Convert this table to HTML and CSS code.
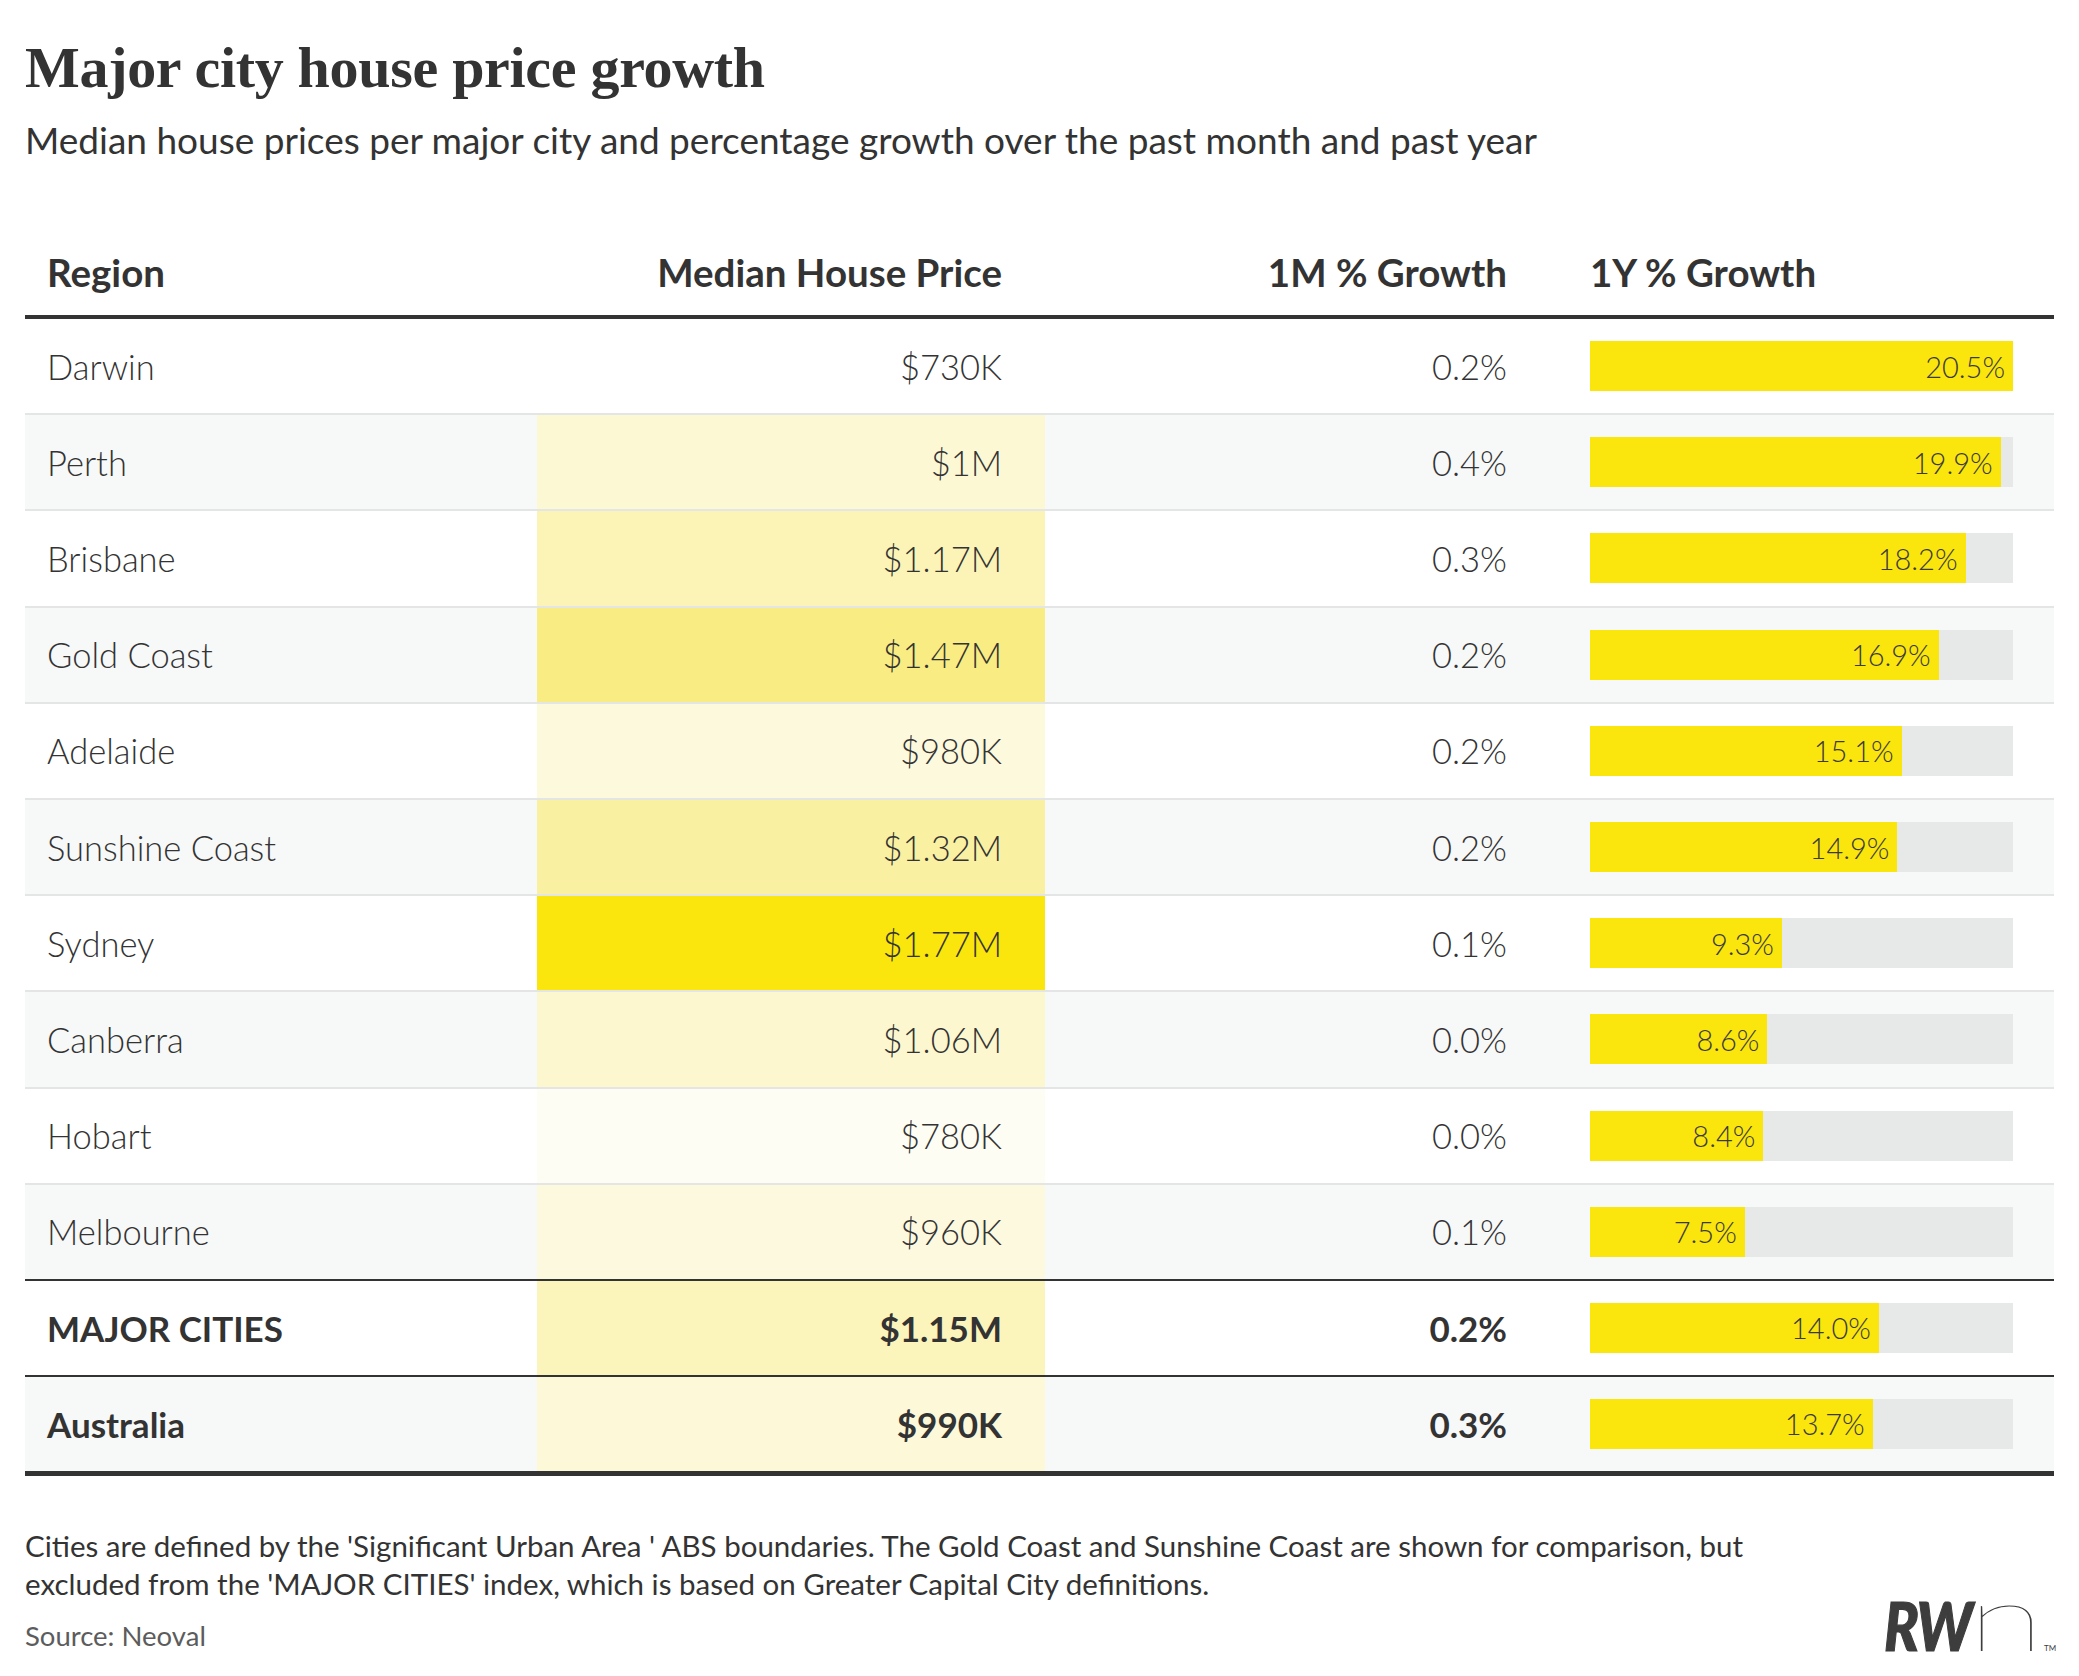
FILE: index.html
```html
<!DOCTYPE html>
<html lang="en">
<head>
<meta charset="utf-8">
<title>Major city house price growth</title>
<link rel="stylesheet" href="styles.css">
</head>
<body>
<div class="page">
  <h1 class="title">Major city house price growth</h1>
  <p class="subtitle">Median house prices per major city and percentage growth over the past month and past year</p>

  <div class="table">
    <div class="row head">
      <div class="cell c-region">Region</div>
      <div class="cell c-price">Median House Price</div>
      <div class="cell c-month">1M % Growth</div>
      <div class="cell c-year">1Y % Growth</div>
    </div>

    <div class="row">
      <div class="cell c-region">Darwin</div>
      <div class="cell c-price">$730K</div>
      <div class="cell c-month">0.2%</div>
      <div class="cell c-year"><div class="track"><div class="fill" style="width:100%"><span>20.5%</span></div></div></div>
    </div>
    <div class="row alt">
      <div class="cell c-region">Perth</div>
      <div class="cell c-price" style="background:#fcf8d4">$1M</div>
      <div class="cell c-month">0.4%</div>
      <div class="cell c-year"><div class="track"><div class="fill" style="width:97.07%"><span>19.9%</span></div></div></div>
    </div>
    <div class="row">
      <div class="cell c-region">Brisbane</div>
      <div class="cell c-price" style="background:#fbf4b6">$1.17M</div>
      <div class="cell c-month">0.3%</div>
      <div class="cell c-year"><div class="track"><div class="fill" style="width:88.78%"><span>18.2%</span></div></div></div>
    </div>
    <div class="row alt">
      <div class="cell c-region">Gold Coast</div>
      <div class="cell c-price" style="background:#f8ec82">$1.47M</div>
      <div class="cell c-month">0.2%</div>
      <div class="cell c-year"><div class="track"><div class="fill" style="width:82.44%"><span>16.9%</span></div></div></div>
    </div>
    <div class="row">
      <div class="cell c-region">Adelaide</div>
      <div class="cell c-price" style="background:#fdf9dc">$980K</div>
      <div class="cell c-month">0.2%</div>
      <div class="cell c-year"><div class="track"><div class="fill" style="width:73.66%"><span>15.1%</span></div></div></div>
    </div>
    <div class="row alt">
      <div class="cell c-region">Sunshine Coast</div>
      <div class="cell c-price" style="background:#f9f0a2">$1.32M</div>
      <div class="cell c-month">0.2%</div>
      <div class="cell c-year"><div class="track"><div class="fill" style="width:72.68%"><span>14.9%</span></div></div></div>
    </div>
    <div class="row">
      <div class="cell c-region">Sydney</div>
      <div class="cell c-price" style="background:#fae50c">$1.77M</div>
      <div class="cell c-month">0.1%</div>
      <div class="cell c-year"><div class="track"><div class="fill" style="width:45.37%"><span>9.3%</span></div></div></div>
    </div>
    <div class="row alt">
      <div class="cell c-region">Canberra</div>
      <div class="cell c-price" style="background:#fcf7cf">$1.06M</div>
      <div class="cell c-month">0.0%</div>
      <div class="cell c-year"><div class="track"><div class="fill" style="width:41.95%"><span>8.6%</span></div></div></div>
    </div>
    <div class="row">
      <div class="cell c-region">Hobart</div>
      <div class="cell c-price" style="background:#fefdf4">$780K</div>
      <div class="cell c-month">0.0%</div>
      <div class="cell c-year"><div class="track"><div class="fill" style="width:40.98%"><span>8.4%</span></div></div></div>
    </div>
    <div class="row alt last-city">
      <div class="cell c-region">Melbourne</div>
      <div class="cell c-price" style="background:#fdf9df">$960K</div>
      <div class="cell c-month">0.1%</div>
      <div class="cell c-year"><div class="track"><div class="fill" style="width:36.59%"><span>7.5%</span></div></div></div>
    </div>
    <div class="row total">
      <div class="cell c-region">MAJOR CITIES</div>
      <div class="cell c-price" style="background:#fbf4bb">$1.15M</div>
      <div class="cell c-month">0.2%</div>
      <div class="cell c-year"><div class="track"><div class="fill" style="width:68.29%"><span>14.0%</span></div></div></div>
    </div>
    <div class="row alt total final">
      <div class="cell c-region">Australia</div>
      <div class="cell c-price" style="background:#fcf8d8">$990K</div>
      <div class="cell c-month">0.3%</div>
      <div class="cell c-year"><div class="track"><div class="fill" style="width:66.83%"><span>13.7%</span></div></div></div>
    </div>
  </div>

  <footer class="foot">
    <div class="notes">
      <p class="note">Cities are defined by the 'Significant Urban Area ' ABS boundaries. The Gold Coast and Sunshine Coast are shown for comparison, but<br>excluded from the 'MAJOR CITIES' index, which is based on Greater Capital City definitions.</p>
      <p class="source">Source: Neoval</p>
    </div>
    <div class="logo"><span class="rw">RW</span><span class="n">n</span><span class="tm">TM</span></div>
  </footer>
</div>
</body>
</html>
```

FILE: styles.css
```css
html, body {
  margin: 0;
  padding: 0;
  background: #ffffff;
}

body {
  color: #333333;
  font-family: "Lato", "Noto Sans", sans-serif;
  overflow: hidden;
}

.page {
  padding: 35px 25px 0 25px;
}

.title {
  margin: 0;
  font-family: "Liberation Serif", "Times New Roman", serif;
  font-weight: 700;
  font-size: 58px;
  line-height: 66px;
  letter-spacing: -0.3px;
  color: #333333;
}

.subtitle {
  margin: 17px 0 0 0;
  font-size: 37px;
  line-height: 44px;
  font-weight: 400;
  color: #333333;
}

.table {
  margin-top: 87px;
}

.row {
  display: grid;
  grid-template-columns: 512px 508px 502px 507px;
  box-sizing: border-box;
  height: 96.2px;
  border-bottom: 2px solid #e4e5e5;
  background: #ffffff;
}

.row.alt {
  background: #f7f8f8;
}

.row.head {
  height: auto;
  border-bottom: 4px solid #333333;
}

.row.last-city {
  border-bottom: 2px solid #333333;
}

.row.total {
  border-bottom: 2px solid #333333;
  height: 96px;
}

.row.final {
  border-bottom: 5px solid #333333;
  height: 99px;
}

.cell {
  display: flex;
  align-items: center;
  box-sizing: border-box;
  font-size: 34.5px;
  font-weight: 300;
  white-space: nowrap;
}

.head .cell {
  font-weight: 700;
  font-size: 38.5px;
  line-height: 46px;
  padding-bottom: 20px;
  align-items: flex-end;
}

.total .cell {
  font-weight: 700;
  font-size: 35px;
}

.c-region {
  padding-left: 22px;
}

.c-price {
  justify-content: flex-end;
  padding-right: 43px;
}

.c-month {
  justify-content: flex-end;
  padding-right: 40px;
}

.c-year {
  padding-left: 43px;
  padding-right: 41px;
}

.track {
  width: 100%;
  height: 50px;
  background: #e7e8e8;
  display: flex;
}

.fill {
  height: 100%;
  background: #fae50c;
  display: flex;
  align-items: center;
  justify-content: flex-end;
  box-sizing: border-box;
  padding-right: 8px;
}

.total .fill span,
.fill span {
  font-size: 29px;
  font-weight: 300;
  color: #3a3a3a;
}

.foot {
  margin-top: 51px;
  display: flex;
  justify-content: space-between;
  align-items: flex-end;
}

.notes p {
  margin: 0;
  line-height: 38.5px;
  font-weight: 400;
}

.note {
  font-size: 29.5px;
  color: #333333;
}

.notes .source {
  margin-top: 13px;
  font-size: 27.5px;
  color: #5c5c5c;
}

.logo {
  display: flex;
  align-items: baseline;
  line-height: 1;
  color: #3d3d3d;
  margin-bottom: -7px;
}

.rw {
  display: inline-block;
  width: 80px;
  font-family: "Lato", sans-serif;
  font-weight: 900;
  font-style: italic;
  font-size: 67px;
  letter-spacing: -2px;
  -webkit-text-stroke: 1.2px #3d3d3d;
  transform: scaleX(0.86);
  transform-origin: left bottom;
  white-space: nowrap;
}

.n {
  display: inline-block;
  width: 51px;
  font-family: "Lato", sans-serif;
  font-weight: 100;
  font-size: 93px;
  transform: scaleX(1.5);
  transform-origin: left bottom;
  margin-left: 4px;
  margin-right: 25px;
}

.tm {
  display: inline-block;
  width: 10px;
  font-size: 8px;
  font-weight: 400;
}
```
